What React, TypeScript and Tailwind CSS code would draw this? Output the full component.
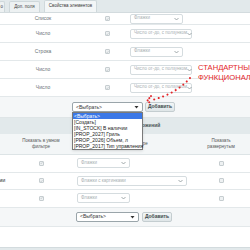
import { ReactNode } from 'react';

const FONT = { fontFamily: '"Liberation Sans", Arial, sans-serif' };

function Chevron() {
  return (
    <svg width="5" height="4" viewBox="0 0 5 4" className="shrink-0">
      <path d="M0.5 1 L2.5 3 L4.5 1" fill="none" stroke="#8a9498" strokeWidth="0.8" />
    </svg>
  );
}

function Select({ label, w, dark }: { label: string; w: string; dark?: boolean }) {
  return (
    <div
      className={`${w} h-[10px] flex items-center justify-between px-[3px] rounded-[2px] border bg-white ${
        dark ? 'border-[#9aa5aa] text-[#333] text-[5px]' : 'border-[#d5dcdf] text-[#a8b0b3] text-[4.5px]'
      }`}
    >
      <span className="leading-none whitespace-nowrap">{label}</span>
      {dark ? (
        <svg width="5" height="4" viewBox="0 0 5 4">
          <path d="M0.5 1 L4.5 1 L2.5 3.5 Z" fill="#333" />
        </svg>
      ) : (
        <Chevron />
      )}
    </div>
  );
}

function Check({ on }: { on?: boolean }) {
  return (
    <div className="w-[5px] h-[5px] rounded-[1px] border border-[#c6cdd0] bg-[#eef1f2] flex items-center justify-center">
      {on && (
        <svg width="4" height="4" viewBox="0 0 4 4">
          <path d="M0.6 2 L1.6 3 L3.4 0.8" fill="none" stroke="#b4bcbf" strokeWidth="0.7" />
        </svg>
      )}
    </div>
  );
}

function AddButton() {
  return (
    <div className="h-[10px] w-[30px] flex items-center justify-center rounded-[2px] border border-[#c4cdd0] bg-gradient-to-b from-[#f2f6f7] to-[#dfe6e8] text-[5px] font-bold text-[#3f4a4e]">
      Добавить
    </div>
  );
}

function TopRow({ type, select, wide, h = 'h-[18px]' }: { type: string; select: string; wide?: boolean; h?: string }) {
  return (
    <div className={`grid grid-cols-[86px_42px_1fr] items-center ${h} border-b border-[#e3e8ea]`}>
      <div className="text-center text-[5px] text-[#6b7377]">{type}</div>
      <div className="flex justify-center">
        <Check on />
      </div>
      <div className="pl-[2px]">
        <Select label={select} w={wide ? 'w-[62px]' : 'w-[53px]'} />
      </div>
    </div>
  );
}

function BottomRow({ select, wide, left }: { select: string; wide?: boolean; left?: ReactNode }) {
  return (
    <div className="relative grid grid-cols-[76px_1fr_56px] items-center h-[17.5px] border-b border-[#e3e8ea]">
      {left && <div className="absolute -left-[6px] text-[5px] text-[#333]">{left}</div>}
      <div className="flex justify-center pl-[6px]">
        <Check on />
      </div>
      <div className="pl-[1px]">
        <Select label={select} w={wide ? 'w-[110px]' : 'w-[53px]'} />
      </div>
      <div className="flex justify-center pr-[2px]">
        <Check />
      </div>
    </div>
  );
}

const OPTIONS = ['[Создать]', '[IN_STOCK] В наличии', '[PROP_2027] Гриль', '[PROP_2026] Объем, л', '[PROP_2017] Тип управления'];

export default function App() {
  return (
    <div className="relative w-[250px] h-[250px] overflow-hidden bg-white" style={FONT}>
      {/* tabs */}
      <div className="h-[13px] bg-[#e2e9eb] border-b border-[#d3dbde] flex items-end gap-[4px] pl-0">
        <div className="h-[11px] w-[6px] -ml-[1px] bg-[#edf1f2] border border-b-0 border-[#cfd8db] rounded-t-[2px] text-[4.5px] text-[#444] flex items-center justify-end pr-[1px]">
          о
        </div>
        <div className="h-[11px] w-[31px] bg-[#edf1f2] border border-b-0 border-[#cfd8db] rounded-t-[2px] text-[4.5px] text-[#444] flex items-center justify-center">
          Доп. поля
        </div>
        <div className="h-[12px] w-[53px] bg-[#f3f6f7] border border-b-0 border-[#cfd8db] rounded-t-[2px] text-[4.5px] text-[#333] flex items-center justify-center">
          Свойства элементов
        </div>
      </div>

      {/* first table */}
      <TopRow type="Список" select="Флажки" h="h-[12px]" />
      <TopRow type="Число" select="Число от-до, с ползунком" wide />
      <TopRow type="Строка" select="Флажки" />
      <TopRow type="Число" select="Число от-до, с ползунком" wide />
      <TopRow type="Число" select="Число от-до, с ползунком" wide />

      <div className="h-[21px] bg-[#f5f7f8] border-b border-[#dfe5e7] flex items-center gap-[2px] pl-[72px]">
        <Select label="<Выбрать>" w="w-[71px]" dark />
        <AddButton />
      </div>

      {/* offers section */}
      <div className="h-[16px] bg-[#e2e9eb] flex items-center justify-center pl-[12px]">
        <span className="text-[5px] font-bold text-[#4a5559]">Свойства предложений</span>
      </div>
      <div className="grid grid-cols-[76px_1fr_56px] items-center h-[21px] bg-[#f3f6f7] border-b border-[#dde4e6] text-[4.5px] text-[#555] leading-[6px] text-center">
        <div className="pl-[6px]">
          Показать в умном
          <br />
          фильтре
        </div>
        <div className="pr-[20px]">Вид в умном фильтре</div>
        <div className="pr-[2px]">
          Показать
          <br />
          развернутым
        </div>
      </div>
      <BottomRow select="Флажки" />
      <BottomRow select="Флажки с картинками" wide left="ками" />
      <BottomRow select="Флажки" />

      <div className="h-[19px] bg-[#f5f7f8] border-b border-[#e3e8ea] flex items-center gap-[3px] pl-[76px]">
        <Select label="<Выбрать>" w="w-[63px]" dark />
        <AddButton />
      </div>
      <div className="h-[20px] bg-white" />
      <div className="h-[10px] bg-[#e2e9eb] border-t border-[#d3dbde]" />

      {/* open dropdown */}
      <div className="absolute left-[72px] top-[112px] w-[71px] bg-white border border-[#7a7a7a] text-[5px] leading-[6px] text-[#222] shadow-sm">
        <div className="bg-[#3b78e7] text-white px-[1px]">&lt;Выбрать&gt;</div>
        {OPTIONS.map((o) => (
          <div key={o} className="px-[1px] whitespace-nowrap">
            {o}
          </div>
        ))}
      </div>

      {/* annotation */}
      <div className="absolute left-[198px] top-[63px] text-[#e3262a] text-[7.6px] leading-[10px] whitespace-nowrap">
        СТАНДАРТНЫЙ
        <br />
        ФУНКЦИОНАЛ
      </div>
      <svg className="absolute left-0 top-0" width="250" height="250">
        <path
          d="M190 78 Q176 94 152 100"
          fill="none"
          stroke="#e3262a"
          strokeWidth="2"
          strokeLinecap="round"
          strokeDasharray="0.1 4.6"
        />
        <path
          d="M151 96 L147.5 100.5 L151 104"
          fill="none"
          stroke="#e3262a"
          strokeWidth="2"
          strokeLinecap="round"
          strokeDasharray="0.1 2.6"
        />
      </svg>
    </div>
  );
}
